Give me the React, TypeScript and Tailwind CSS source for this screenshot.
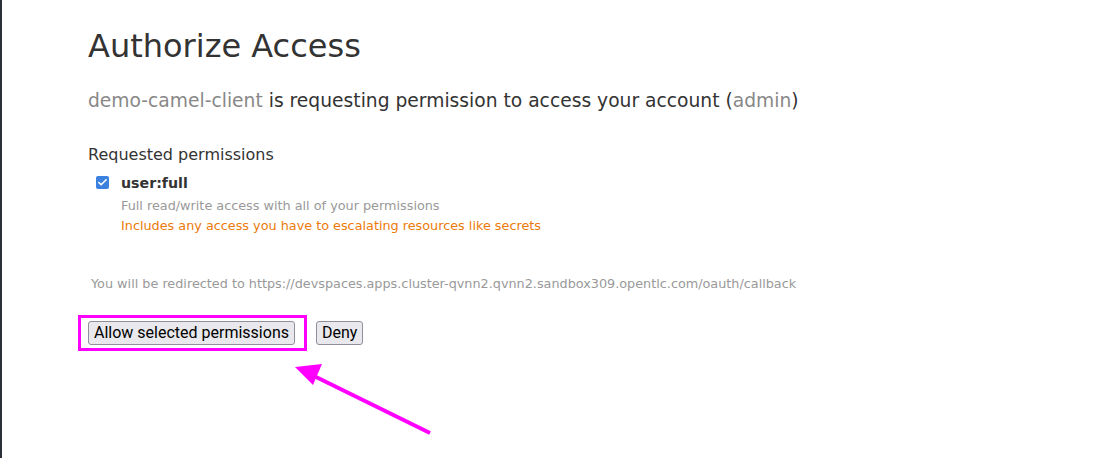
import { Check } from "lucide-react";

const sans = "font-['DejaVu_Sans',sans-serif]";

export default function App() {
  return (
    <div className="relative h-[458px] w-[1107px] overflow-hidden border-l-2 border-[#2c3038] bg-white text-[#333]">
      <div className={`pl-[86px] pt-[26px] ${sans}`}>
        <h1 className="text-[32px] leading-[40px] text-[#333]">Authorize Access</h1>
        <p className="mt-[20px] text-[18.7px] leading-[30px]">
          <span className="text-[#888]">demo-camel-client</span> is requesting permission to access your account (
          <span className="text-[#888]">admin</span>)
        </p>

        <h4 className="mt-[29px] text-[16px] leading-[20px]">Requested permissions</h4>
        <div className="mt-[8px] flex gap-[12px] pl-[8px]">
          <span className="mt-[3px] flex h-[13px] w-[13px] items-center justify-center rounded-[2px] bg-[#3b82e0]">
            <Check size={11} strokeWidth={3.5} className="text-white" />
          </span>
          <div>
            <div className="text-[14.2px] font-bold leading-[20px]">user:full</div>
            <div className="mt-[3px] text-[12.8px] leading-[20px] text-[#999]">
              Full read/write access with all of your permissions
            </div>
            <div className="text-[12.8px] leading-[20px] text-[#ec7a08]">
              Includes any access you have to escalating resources like secrets
            </div>
          </div>
        </div>

        <p className="mt-[39px] pl-[3px] text-[12.8px] leading-[18px] text-[#999]">
          You will be redirected to https://devspaces.apps.cluster-qvnn2.qvnn2.sandbox309.opentlc.com/oauth/callback
        </p>

        <div className="mt-[28px] flex items-center gap-[20px] font-['Roboto',sans-serif] text-[16px] text-black">
          <div className="-my-[10px] -ml-[10px] -mr-[11px] border-[3px] border-[#ff00ff] py-[3px] pl-[7px] pr-[9px]">
            <button className="h-[24px] rounded-[3px] border border-[#8f8f9d] bg-[#e9e9ed] px-[5px] leading-[20px]">
              Allow selected permissions
            </button>
          </div>
          <button className="h-[24px] rounded-[3px] border border-[#8f8f9d] bg-[#e9e9ed] px-[5px] leading-[20px]">
            Deny
          </button>
        </div>
      </div>

      <svg className="absolute left-0 top-0" width="1107" height="458" viewBox="0 0 1107 458">
        <line x1="428" y1="433" x2="312" y2="376" stroke="#ff00ff" strokeWidth="4" />
        <polygon points="293,367 320,364 311,385" fill="#ff00ff" />
      </svg>
    </div>
  );
}
